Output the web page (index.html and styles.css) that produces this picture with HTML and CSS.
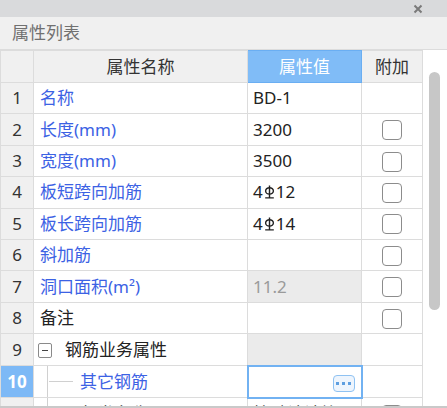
FILE: index.html
```html
<!DOCTYPE html>
<html lang="zh-CN">
  <head>
    <meta charset="UTF-8" />
    <meta name="viewport" content="width=device-width, initial-scale=1.0" />
    <title>属性列表</title>
    <link rel="stylesheet" href="styles.css">
  </head>
  <body>
    <div class="panel">
      <div class="topbar">
        <svg class="close" width="10" height="10" viewBox="0 0 10 10">
          <path d="M1.5 1.5 L8.5 8.5 M8.5 1.5 L1.5 8.5" stroke="#7a7a7a" stroke-width="2" />
        </svg>
      </div>
      <div class="title">属性列表</div>
      <div class="body">
        <table class="props">
          <colgroup>
            <col class="c-num" />
            <col class="c-name" />
            <col class="c-value" />
            <col class="c-extra" />
          </colgroup>
          <thead>
            <tr>
              <th></th>
              <th>属性名称</th>
              <th class="active">属性值</th>
              <th>附加</th>
            </tr>
          </thead>
          <tbody>
            <tr>
              <td class="num">1</td>
              <td class="name link">名称</td>
              <td class="value">BD-1</td>
              <td class="extra"></td>
            </tr>
            <tr>
              <td class="num">2</td>
              <td class="name link">长度(mm)</td>
              <td class="value">3200</td>
              <td class="extra"><span class="check"></span></td>
            </tr>
            <tr>
              <td class="num">3</td>
              <td class="name link">宽度(mm)</td>
              <td class="value">3500</td>
              <td class="extra"><span class="check"></span></td>
            </tr>
            <tr>
              <td class="num">4</td>
              <td class="name link">板短跨向加筋</td>
              <td class="value">4<svg class="rebar" width="11" height="14" viewBox="0 0 10 13"><path d="M5 0.5 V12 M1 12 H9" stroke="#222" stroke-width="1.3" fill="none" /><ellipse cx="5" cy="5.5" rx="3.6" ry="3" stroke="#222" stroke-width="1.3" fill="none" /></svg>12</td>
              <td class="extra"><span class="check"></span></td>
            </tr>
            <tr>
              <td class="num">5</td>
              <td class="name link">板长跨向加筋</td>
              <td class="value">4<svg class="rebar" width="11" height="14" viewBox="0 0 10 13"><path d="M5 0.5 V12 M1 12 H9" stroke="#222" stroke-width="1.3" fill="none" /><ellipse cx="5" cy="5.5" rx="3.6" ry="3" stroke="#222" stroke-width="1.3" fill="none" /></svg>14</td>
              <td class="extra"><span class="check"></span></td>
            </tr>
            <tr>
              <td class="num">6</td>
              <td class="name link">斜加筋</td>
              <td class="value"></td>
              <td class="extra"><span class="check"></span></td>
            </tr>
            <tr>
              <td class="num">7</td>
              <td class="name link">洞口面积(m²)</td>
              <td class="value readonly">11.2</td>
              <td class="extra"><span class="check"></span></td>
            </tr>
            <tr>
              <td class="num">8</td>
              <td class="name">备注</td>
              <td class="value"></td>
              <td class="extra"><span class="check"></span></td>
            </tr>
            <tr>
              <td class="num">9</td>
              <td class="name group"><span class="toggle"></span>钢筋业务属性</td>
              <td class="value readonly"></td>
              <td class="extra"></td>
            </tr>
            <tr class="selected">
              <td class="num">10</td>
              <td class="name child link"><span class="branch"></span>其它钢筋</td>
              <td class="value editing"><span class="more"><i></i><i></i><i></i></span></td>
              <td class="extra"></td>
            </tr>
            <tr>
              <td class="num">11</td>
              <td class="name child"><span class="branch"></span>归类名称</td>
              <td class="value">按默认计算</td>
              <td class="extra"><span class="check"></span></td>
            </tr>
          </tbody>
        </table>
        <div class="scroll"><div class="thumb"></div></div>
      </div>
    </div>
  </body>
</html>
```

FILE: styles.css
```css
html,
body {
  margin: 0;
  padding: 0;
  background: #ffffff;
}

body {
  font-family: "Noto Sans", "Noto Sans CJK SC", sans-serif;
  font-size: 17px;
  color: #222;
}

.panel {
  width: 447px;
  height: 408px;
  box-sizing: border-box;
  border-bottom: 2px solid #c9c9c9;
  overflow: hidden;
}

.topbar {
  height: 17px;
  background-color: #d9dadc;
  display: flex;
  align-items: center;
  justify-content: flex-end;
  padding-right: 24px;
}

.title {
  height: 33px;
  box-sizing: border-box;
  background-color: #f0f0f0;
  border-bottom: 1px solid #dcdcdc;
  color: #707070;
  font-size: 17px;
  line-height: 32px;
  padding-left: 12px;
}

.body {
  display: flex;
  align-items: flex-start;
}

.props {
  width: 422px;
  table-layout: fixed;
  border-collapse: collapse;
  flex: none;
}

.c-num {
  width: 33px;
}

.c-name {
  width: 214px;
}

.c-value {
  width: 114px;
}

.c-extra {
  width: 61px;
}

th,
td {
  border: 1px solid #dcdcdc;
  padding: 0;
  white-space: nowrap;
  overflow: hidden;
  line-height: 20px;
}

th {
  height: 31px;
  background-color: #f0f0f0;
  font-weight: normal;
  color: #333;
  text-align: center;
}

th.active {
  background-color: #80bcf7;
  border-color: #6aaef2;
  color: #ffffff;
}

td {
  height: 30.4px;
}

.num {
  background-color: #f0f0f0;
  text-align: center;
  color: #333;
}

.name {
  padding-left: 6px;
}

.link {
  color: #3c62e4;
}

.value {
  padding-left: 5px;
  color: #222;
}

.value.readonly {
  background-color: #ebebeb;
  color: #9a9a9a;
}

.rebar {
  margin: 0 1px;
  vertical-align: -1px;
}

.extra {
  text-align: center;
}

.check {
  display: inline-block;
  width: 20px;
  height: 20px;
  box-sizing: border-box;
  border: 1.5px solid #8c8c8c;
  border-radius: 4px;
  vertical-align: middle;
}

.group {
  padding-left: 4px;
}

.toggle {
  display: inline-block;
  position: relative;
  width: 14px;
  height: 15px;
  box-sizing: border-box;
  border: 1px solid #8a8a8a;
  border-radius: 2px;
  vertical-align: -2px;
  margin-right: 13px;
}

.toggle::after {
  content: "";
  position: absolute;
  left: 3px;
  right: 3px;
  top: 6px;
  height: 1px;
  background-color: #444;
}

.child {
  position: relative;
  padding-left: 46px;
}

.child::before {
  content: "";
  position: absolute;
  left: 13px;
  top: 0;
  bottom: 0;
  width: 1px;
  background-color: #d0d0d0;
}

.branch {
  position: absolute;
  left: 15px;
  top: 15px;
  width: 24px;
  height: 1px;
  background-color: #d0d0d0;
}

.selected .num {
  background-color: #7db9f6;
  color: #ffffff;
  font-weight: bold;
}

.value.editing {
  border: 2px solid #72b2f2;
  text-align: right;
  padding-right: 6px;
}

.more {
  display: inline-flex;
  align-items: center;
  justify-content: center;
  gap: 3px;
  width: 22px;
  height: 17px;
  box-sizing: border-box;
  border: 1.5px solid #8fc2f2;
  border-radius: 4px;
  background-color: #eef5fd;
  vertical-align: middle;
}

.more i {
  width: 3px;
  height: 3px;
  background-color: #5e9fe0;
}

.scroll {
  flex: 1;
  padding: 22px 7px 0 6px;
}

.thumb {
  height: 238px;
  border-radius: 6px;
  background-color: #c7c7c7;
}
```
